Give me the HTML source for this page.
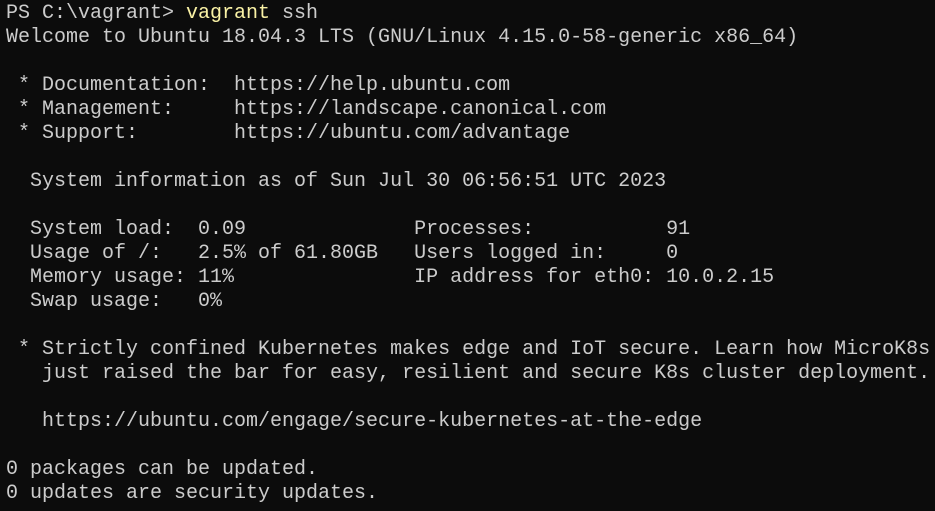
<!DOCTYPE html>
<html><head><meta charset="utf-8"><style>
html,body{margin:0;padding:0;background:#0c0c0c;width:935px;height:511px;overflow:hidden}
pre{margin:0;padding:2px 0 0 6px;font-family:"Liberation Mono","DejaVu Sans Mono",monospace;font-size:20px;line-height:24px;color:#cccccc;white-space:pre}
.y{color:#f9f1a5}
</style></head><body><pre>PS C:\vagrant> <span class="y">vagrant</span> ssh
Welcome to Ubuntu 18.04.3 LTS (GNU/Linux 4.15.0-58-generic x86_64)

 * Documentation:  https://help.ubuntu.com
 * Management:     https://landscape.canonical.com
 * Support:        https://ubuntu.com/advantage

  System information as of Sun Jul 30 06:56:51 UTC 2023

  System load:  0.09              Processes:           91
  Usage of /:   2.5% of 61.80GB   Users logged in:     0
  Memory usage: 11%               IP address for eth0: 10.0.2.15
  Swap usage:   0%

 * Strictly confined Kubernetes makes edge and IoT secure. Learn how MicroK8s
   just raised the bar for easy, resilient and secure K8s cluster deployment.

   https://ubuntu.com/engage/secure-kubernetes-at-the-edge

0 packages can be updated.
0 updates are security updates.
</pre></body></html>
